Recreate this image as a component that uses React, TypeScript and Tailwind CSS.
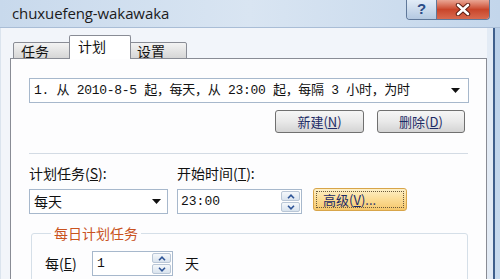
import type { ReactNode } from 'react';

const cjk = "font-['Noto_Sans_CJK_SC',sans-serif]";
const mono = "font-['Liberation_Mono','Noto_Sans_CJK_SC',monospace]";

function DropArrow() {
  return (
    <svg width="9" height="5" viewBox="0 0 9 5" className="shrink-0">
      <path d="M0 0h9L4.5 5z" fill="#111" />
    </svg>
  );
}

function Spin() {
  return (
    <div className="flex flex-col gap-px w-[19px] h-[21px]">
      <div className="flex-1 flex items-center justify-center rounded-[2px] border border-[#b9c6d6] bg-gradient-to-b from-[#f5f8fb] to-[#d9e3ee]">
        <svg width="8" height="5" viewBox="0 0 8 5">
          <path d="M1 4.2L4 1.2 7 4.2" fill="none" stroke="#2f5597" strokeWidth="1.6" />
        </svg>
      </div>
      <div className="flex-1 flex items-center justify-center rounded-[2px] border border-[#b9c6d6] bg-gradient-to-b from-[#f5f8fb] to-[#d9e3ee]">
        <svg width="8" height="5" viewBox="0 0 8 5">
          <path d="M1 0.8L4 3.8 7 0.8" fill="none" stroke="#2f5597" strokeWidth="1.6" />
        </svg>
      </div>
    </div>
  );
}

function Button({ w, children }: { w: string; children: ReactNode }) {
  return (
    <div
      className={`${w} h-[23px] flex items-center justify-center rounded-[3px] border border-[#707070] bg-gradient-to-b from-[#f6f6f6] via-[#e9e9e9] to-[#d4d4d4] text-[13px] text-[#1d2b66] ${cjk}`}
    >
      {children}
    </div>
  );
}

function Tab({ label, active }: { label: string; active?: boolean }) {
  if (active) {
    return (
      <div
        className={`relative z-10 -mb-px -mx-[2px] w-[62px] h-[24px] flex items-center pl-[8px] pb-[2px] border border-b-0 border-[#898c95] rounded-t-[2px] bg-white text-[14px] text-[#111] ${cjk}`}
      >
        {label}
      </div>
    );
  }
  return (
    <div
      className={`-mb-px w-[58px] h-[17px] flex items-center pl-[7px] pt-[2px] border border-[#898c95] rounded-t-[2px] bg-gradient-to-b from-[#f3f3f3] to-[#d6d6d6] text-[14px] text-[#111] ${cjk}`}
    >
      {label}
    </div>
  );
}

export default function App() {
  return (
    <div className="w-[500px] h-[279px] overflow-hidden bg-[#f2f5fa] flex flex-col">
      {/* title bar */}
      <div className="h-[28px] shrink-0 flex justify-between bg-gradient-to-r from-[#c8d9ec] via-[#d9e5f2] to-[#c3d6eb] border-b border-[#a9bdd6]">
        <div className="pl-[12px] pt-[3px] text-[15px] text-[#1b1b1b] font-['Open_Sans',sans-serif] leading-[20px] tracking-[-0.1px]">
          chuxuefeng-wakawaka
        </div>
        <div className="mr-[10px] h-[20px] flex border border-t-0 border-[#5f7899] rounded-b-[4px] overflow-hidden">
          <div className="w-[30px] flex items-center justify-center bg-gradient-to-b from-[#e2ecf7] to-[#b4c9e1] border-r border-[#5f7899] text-[15px] font-bold text-[#294c86] font-['Liberation_Sans',sans-serif]">
            ?
          </div>
          <div className="w-[52px] flex items-center justify-center bg-gradient-to-b from-[#e9a594] via-[#c9452a] to-[#d86a4f]">
            <svg width="16" height="13" viewBox="0 0 16 13">
              <path d="M3 2L13 11M13 2L3 11" stroke="#5a1b10" strokeWidth="4.4" strokeLinecap="round" />
              <path d="M3 2L13 11M13 2L3 11" stroke="#ffffff" strokeWidth="2.6" strokeLinecap="round" />
            </svg>
          </div>
        </div>
      </div>

      {/* body */}
      <div className="flex-1 flex">
        <div className="w-[487px] flex flex-col border-l border-[#dbe4ee] pl-[9px]">
          {/* tabs */}
          <div className="h-[30px] shrink-0 flex items-end pl-[3px]">
            <Tab label="任务" />
            <Tab label="计划" active />
            <Tab label="设置" />
          </div>

          {/* panel */}
          <div className="flex-1 border border-b-0 border-[#898c95] bg-[#fdfdfe] pl-[18px] pt-[19px]">
            <div className="w-[440px] h-[25px] flex items-center justify-between border border-[#a7b8cc] bg-white pl-[4px] pr-[8px]">
              <span className={`text-[13px] tracking-[-0.3px] text-[#111] whitespace-nowrap ${mono}`}>
                1. 从 2010-8-5 起，每天，从 23:00 起，每隔 3 小时，为时
              </span>
              <DropArrow />
            </div>

            <div className="mt-[7px] w-[436px] flex justify-end gap-[13px]">
              <Button w="w-[89px]">
                新建(<u>N</u>)
              </Button>
              <Button w="w-[88px]">
                删除(<u>D</u>)
              </Button>
            </div>

            <div className="mt-[20px] w-[439px] h-px bg-[#d3dbe4]" />

            <div className={`mt-[12px] h-[15px] flex items-center text-[14px] text-[#111] ${cjk}`}>
              <span className="w-[148px]">
                计划任务(<u>S</u>):
              </span>
              <span>
                开始时间(<u>T</u>):
              </span>
            </div>

            <div className="mt-[8px] flex items-start">
              <div className="w-[139px] h-[25px] flex items-center justify-between border border-[#a7b8cc] bg-white pl-[4px] pr-[6px]">
                <span className={`text-[14px] text-[#111] ${cjk}`}>每天</span>
                <DropArrow />
              </div>
              <div className="ml-[9px] w-[125px] h-[25px] flex items-center justify-between border border-[#a7b8cc] bg-white pl-[3px] pr-[1px]">
                <span className={`text-[13px] text-[#111] ${mono}`}>23:00</span>
                <Spin />
              </div>
              <div className="ml-[11px] -mt-px w-[94px] h-[23px] p-[2px] rounded-[3px] border border-[#d8a54a] bg-gradient-to-b from-[#fdf0c8] via-[#fbdc94] to-[#f5c76c]">
                <div className={`h-full flex items-center pl-[6px] border border-dotted border-[#6b5a3a] text-[13px] text-[#1d2b66] ${cjk}`}>
                  高级(<u>V</u>)...
                </div>
              </div>
            </div>

            <fieldset className="mt-[11px] ml-[2px] w-[437px] border border-[#d5dfe8] rounded-[3px] pl-[13px] pb-[10px]">
              <legend className={`ml-[6px] px-[3px] text-[14px] leading-[16px] text-[#c9531f] ${cjk}`}>
                每日计划任务
              </legend>
              <div className="mt-[10px] flex items-center">
                <span className={`w-[47px] text-[14px] text-[#111] ${cjk}`}>
                  每(<u>E</u>)
                </span>
                <div className="w-[81px] h-[25px] flex items-center justify-between border border-[#a7b8cc] bg-white pl-[4px] pr-[1px]">
                  <span className={`text-[13px] text-[#111] ${mono}`}>1</span>
                  <Spin />
                </div>
                <span className={`ml-[12px] text-[14px] text-[#111] ${cjk}`}>天</span>
              </div>
            </fieldset>
          </div>
        </div>

        {/* right window frame */}
        <div className="flex-1 flex">
          <div className="w-[6px] bg-[#e3ebf5]" />
          <div className="w-[2px] bg-[#3f5f8c]" />
          <div className="flex-1 bg-gradient-to-b from-[#b9cfe8] to-[#c9dbee]" />
        </div>
      </div>
    </div>
  );
}
